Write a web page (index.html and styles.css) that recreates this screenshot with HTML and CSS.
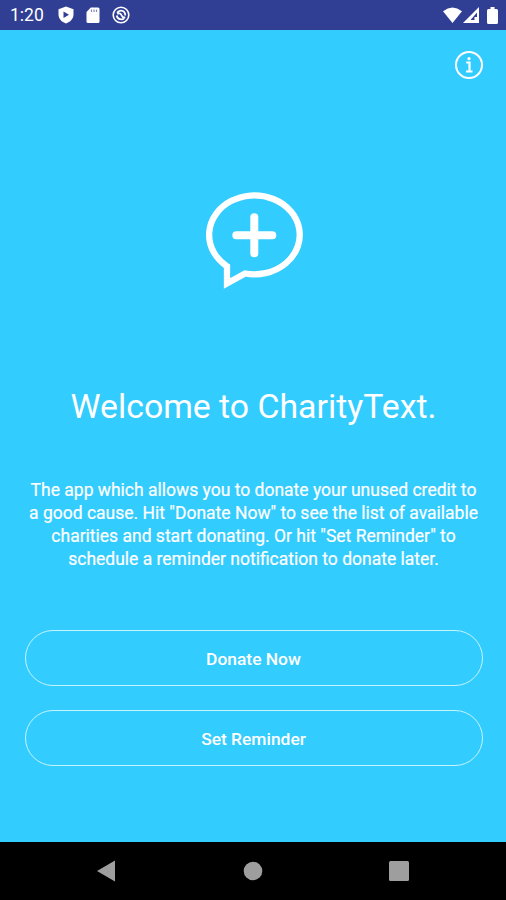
FILE: index.html
```html
<!DOCTYPE html>
<html lang="en">
<head>
  <meta charset="UTF-8">
  <title>CharityText</title>
  <link rel="stylesheet" href="styles.css">
</head>
<body>
  <div class="screen">
    <header class="status-bar">
      <div class="status-left">
        <span class="clock">1:20</span>
        <svg class="icon-shield" width="16" height="18" viewBox="0 0 16 18">
          <path fill="#fff" fill-rule="evenodd" d="M8 0.5 15.5 3.2V8.500C15.500 12.800 12.300 16 8 17.500 3.700 16 0.500 12.800 0.500 8.500V3.200ZM5.500 5.600V12L11 8.800Z"/>
        </svg>
        <svg class="icon-card" width="14" height="17" viewBox="0 0 14 17">
          <path fill="#fff" d="M4.800 0.500H12Q13.500 0.500 13.500 2V14.500Q13.500 16 12 16H2Q0.500 16 0.500 14.500V5Z"/>
          <path stroke="#303f93" stroke-width="1.200" opacity="0.600" d="M5.500 2.500V5M8 2.500V5M10.500 2.500V5"/>
        </svg>
        <svg class="icon-blocked" width="18" height="18" viewBox="0 0 18 18" fill="none" stroke="#fff">
          <circle cx="9" cy="9" r="7.800" stroke-width="1.600"/>
          <path stroke-width="1.800" d="M5 6.800Q6.500 4.600 9.200 4.700 13 5 13.300 9.500M4.700 9.500Q5.500 13.300 9.500 13.300 11 13.300 12.200 12.300M5.300 7.800Q8.500 6.500 9.500 9.200T13.300 11.300"/>
        </svg>
      </div>
      <div class="status-right">
        <svg width="19" height="16" viewBox="0 0 19 16">
          <path fill="#fff" d="M9.500 16 0 4.200Q9.500-3.200 19 4.200Z"/>
        </svg>
        <svg width="16" height="16" viewBox="0 0 16 16">
          <path fill="#fff" fill-rule="evenodd" d="M16 0V16H0ZM14 5.500 7.500 13H11.500V10H14Z"/>
        </svg>
        <svg class="icon-battery" width="11" height="17" viewBox="0 0 11 17">
          <path fill="#fff" d="M3.500 0H7.500V2H9.500Q11 2 11 3.500V15.500Q11 17 9.500 17H1.500Q0 17 0 15.500V3.500Q0 2 1.500 2H3.500Z"/>
        </svg>
      </div>
    </header>

    <main class="content">
      <div class="toolbar">
        <svg width="30" height="30" viewBox="0 0 30 30" fill="none" stroke="#fff">
          <circle cx="15" cy="15" r="13" stroke-width="2"/>
          <path stroke-width="2.200" d="M12.200 12.500H15.500V21.500M12 21.500H18.500"/>
          <circle cx="15" cy="8.700" r="1.600" fill="#fff" stroke="none"/>
        </svg>
      </div>

      <svg class="logo" width="130" height="120" viewBox="0 0 130 120" fill="none" stroke="#fff">
        <path stroke-width="6.300" d="M37 86.300V103.500L55 93.500A45.300 39.500 0 1 0 37 86.300Z"/>
        <path stroke-width="8" stroke-linecap="round" d="M64.300 37.300V73.300M46.300 55.300H82.300"/>
      </svg>

      <h1 class="title">Welcome to CharityText.</h1>

      <p class="intro">
        The app which allows you to donate your unused credit to<br>
        a good cause. Hit "Donate Now" to see the list of available<br>
        charities and start donating. Or hit "Set Reminder" to<br>
        schedule a reminder notification to donate later.
      </p>

      <div class="actions">
        <button class="btn">Donate Now</button>
        <button class="btn">Set Reminder</button>
      </div>
    </main>

    <footer class="nav-bar">
      <svg width="20" height="22" viewBox="0 0 20 22"><path fill="#9e9e9e" d="M19 0.500V21.500L1 11Z"/></svg>
      <svg width="20" height="20" viewBox="0 0 20 20"><circle cx="10" cy="10" r="9.300" fill="#9e9e9e"/></svg>
      <svg width="20" height="20" viewBox="0 0 20 20"><rect width="20" height="20" rx="1.500" fill="#9e9e9e"/></svg>
    </footer>
  </div>
</body>
</html>
```

FILE: styles.css
```css
body {
  margin: 0;
  font-family: Roboto, sans-serif;
  color: #fff;
  background: #33ccff;
}

svg {
  display: block;
}

.screen {
  display: flex;
  flex-direction: column;
  width: 506px;
  height: 900px;
  overflow: hidden;
}

.status-bar {
  display: flex;
  justify-content: space-between;
  box-sizing: border-box;
  height: 30px;
  padding: 0 8px 0 10px;
  background: #303f93;
}

.status-left,
.status-right {
  display: flex;
  align-items: center;
}

.clock {
  width: 48px;
  font-size: 17.5px;
  line-height: 32px;
}

.icon-card {
  margin-left: 12px;
}

.icon-blocked {
  margin-left: 12px;
}

.status-right {
  gap: 1px;
}

.icon-battery {
  margin-left: 7px;
}

.content {
  flex: 1;
  display: flex;
  flex-direction: column;
  align-items: center;
}

.toolbar {
  display: flex;
  justify-content: flex-end;
  align-self: stretch;
  padding: 20px 22px 0 0;
}

.logo {
  margin-top: 100px;
  margin-left: 3px;
}

.title {
  margin: 85px 0 0;
  padding-left: 1px;
  font-size: 33.8px;
  font-weight: 400;
  line-height: 44px;
  white-space: nowrap;
}

.intro {
  margin: 50px 0 0;
  padding-left: 1px;
  font-size: 17.5px;
  line-height: 23px;
  text-align: center;
  white-space: nowrap;
  -webkit-text-stroke: 0.2px #fff;
}

.actions {
  display: flex;
  flex-direction: column;
  gap: 24px;
  width: 458px;
  margin-top: 59px;
  padding-left: 1px;
}

.btn {
  height: 56px;
  padding: 2px 0 0;
  border: 1.5px solid #c4f5ff;
  border-radius: 28px;
  background: none;
  color: #fff;
  font-family: inherit;
  font-size: 17.4px;
  font-weight: 500;
}

.nav-bar {
  display: flex;
  align-items: center;
  justify-content: space-between;
  box-sizing: border-box;
  height: 58px;
  padding: 0 97px 0 96px;
  background: #000;
}
```
